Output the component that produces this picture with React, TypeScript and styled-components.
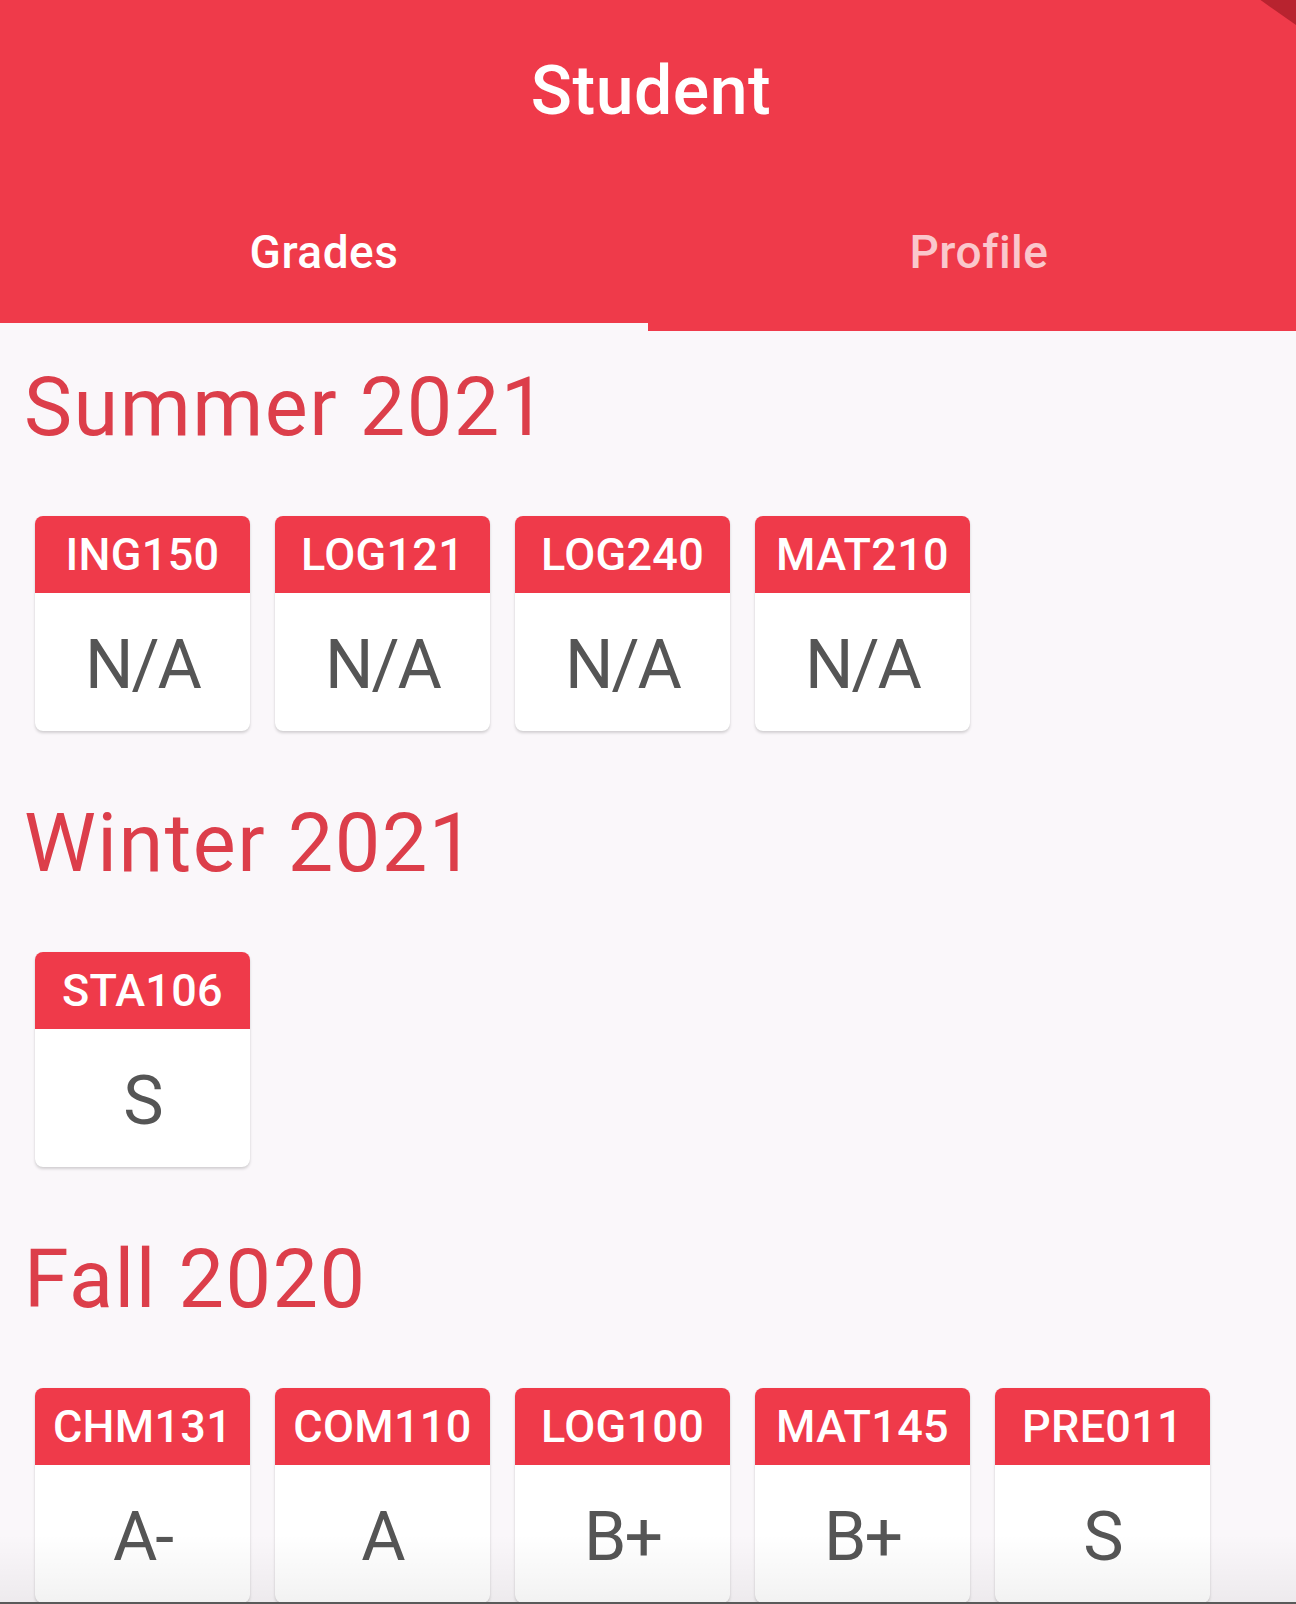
import React from "react";
import styled, { createGlobalStyle } from "styled-components";

const RED = "#EF3A4A";
const PAGE_BG = "#FAF7FA";

const GlobalStyle = createGlobalStyle`
  html, body {
    margin: 0;
    padding: 0;
    background: ${PAGE_BG};
  }
  body {
    font-family: Roboto, "Liberation Sans", Arial, sans-serif;
    -webkit-font-smoothing: antialiased;
  }
  * { box-sizing: border-box; }
`;

const Page = styled.div`
  position: relative;
  width: 1296px;
  min-height: 1604px;
  overflow: hidden;
  background: ${PAGE_BG};
`;

const Header = styled.header`
  display: flex;
  flex-direction: column;
  background: ${RED};
`;

const TitleBar = styled.div`
  height: 180px;
  padding-top: 57px;
  text-align: center;
`;

const Title = styled.h1`
  margin: 0;
  font-size: 68px;
  line-height: 68px;
  font-weight: 500;
  color: #ffffff;
  letter-spacing: 0.5px;
  padding-left: 6px;
`;

const Tabs = styled.nav`
  display: grid;
  grid-template-columns: 1fr 1fr;
  height: 151px;
`;

const Tab = styled.div<{ $active?: boolean }>`
  display: flex;
  align-items: center;
  justify-content: center;
  border-bottom: 8px solid ${(p) => (p.$active ? PAGE_BG : "transparent")};
  font-size: 46px;
  line-height: 48px;
  font-weight: 500;
  letter-spacing: 0.5px;
  color: ${(p) => (p.$active ? "#ffffff" : "rgba(255,255,255,0.72)")};
  padding-left: ${(p) => (p.$active ? "0" : "14px")};
`;

const Corner = styled.div`
  position: absolute;
  top: -30px;
  right: -34px;
  width: 60px;
  height: 52px;
  transform: rotate(35deg);
  background: #b8232f;
`;

const Content = styled.main`
  display: flex;
  flex-direction: column;
  gap: 73px;
  padding: 37px 0 0 24px;
`;

const Section = styled.section`
  display: flex;
  flex-direction: column;
  gap: 68px;
`;

const SectionTitle = styled.h2`
  margin: 0;
  font-size: 81px;
  line-height: 80px;
  font-weight: 400;
  letter-spacing: 1.5px;
  color: #dc3e4a;
`;

const CardRow = styled.div`
  display: flex;
  gap: 25px;
  padding-left: 11px;
`;

const Card = styled.div`
  display: flex;
  flex-direction: column;
  width: 215px;
  height: 215px;
  border-radius: 8px;
  overflow: hidden;
  background: #ffffff;
  box-shadow: 0 2px 3px rgba(0, 0, 0, 0.16), 0 0 1px rgba(0, 0, 0, 0.08);
`;

const CardHead = styled.div`
  display: flex;
  align-items: center;
  justify-content: center;
  height: 77px;
  background: ${RED};
  color: #ffffff;
  font-size: 45px;
  font-weight: 500;
  letter-spacing: 0.3px;
  line-height: 1;
`;

const CardBody = styled.div`
  flex: 1;
  display: flex;
  align-items: center;
  justify-content: center;
  font-size: 68px;
  font-weight: 400;
  letter-spacing: -2px;
  color: #555555;
  line-height: 1;
  padding-top: 6px;
`;

const BottomFade = styled.div`
  position: absolute;
  left: 0;
  right: 0;
  bottom: 0;
  height: 70px;
  background: linear-gradient(to bottom, rgba(0,0,0,0), rgba(0,0,0,0.05));
  border-bottom: 2px solid #5a5a5a;
  pointer-events: none;
`;

type Course = { code: string; grade: string };
type Term = { name: string; courses: Course[] };

const terms: Term[] = [
  {
    name: "Summer 2021",
    courses: [
      { code: "ING150", grade: "N/A" },
      { code: "LOG121", grade: "N/A" },
      { code: "LOG240", grade: "N/A" },
      { code: "MAT210", grade: "N/A" },
    ],
  },
  {
    name: "Winter 2021",
    courses: [{ code: "STA106", grade: "S" }],
  },
  {
    name: "Fall 2020",
    courses: [
      { code: "CHM131", grade: "A-" },
      { code: "COM110", grade: "A" },
      { code: "LOG100", grade: "B+" },
      { code: "MAT145", grade: "B+" },
      { code: "PRE011", grade: "S" },
    ],
  },
];

export default function App() {
  return (
    <Page>
      <GlobalStyle />
      <Header>
        <TitleBar>
          <Title>Student</Title>
        </TitleBar>
        <Tabs>
          <Tab $active>Grades</Tab>
          <Tab>Profile</Tab>
        </Tabs>
      </Header>
      <Corner />
      <Content>
        {terms.map((t) => (
          <Section key={t.name}>
            <SectionTitle>{t.name}</SectionTitle>
            <CardRow>
              {t.courses.map((c) => (
                <Card key={c.code}>
                  <CardHead>{c.code}</CardHead>
                  <CardBody>{c.grade}</CardBody>
                </Card>
              ))}
            </CardRow>
          </Section>
        ))}
      </Content>
      <BottomFade />
    </Page>
  );
}
